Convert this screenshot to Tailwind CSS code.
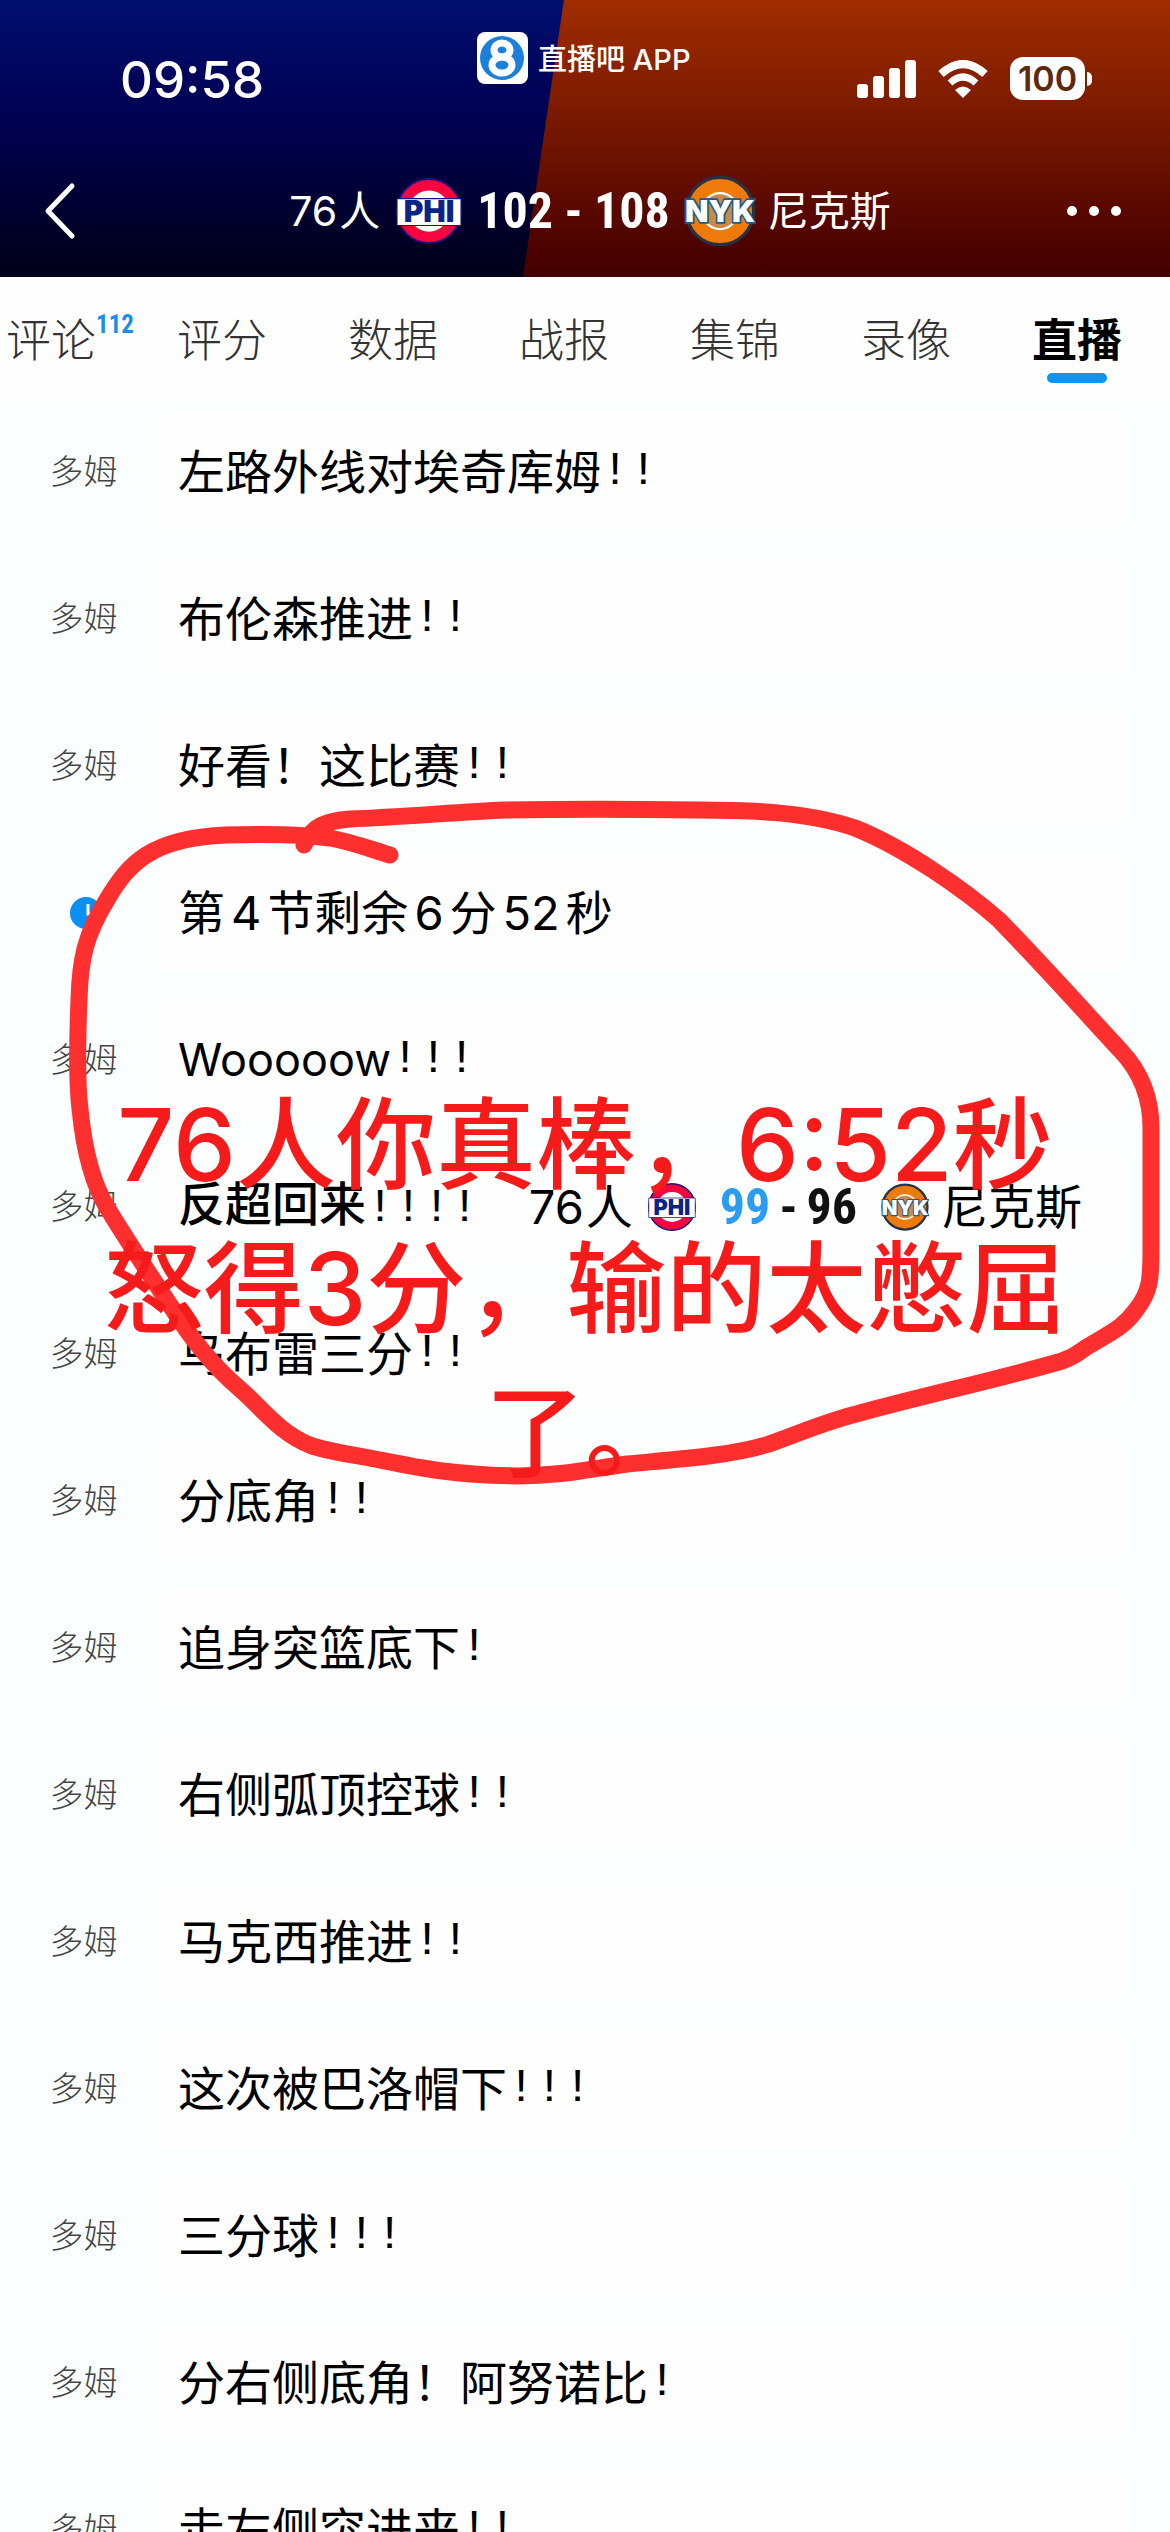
<!DOCTYPE html>
<html lang="zh-CN">
<head>
  <meta charset="UTF-8" />
  <meta name="viewport" content="width=device-width, initial-scale=1" />
  <title>76人 102 - 108 尼克斯</title>
  <script src="https://cdn.jsdelivr.net/npm/@tailwindcss/browser@4"></script>
</head>
<body class="relative flex h-screen flex-col overflow-hidden bg-[#fbfeff] font-['Inter','Noto_Sans_CJK_SC',sans-serif] text-black">

  <!-- Logos, reused in the header and in the score row -->
  <svg class="hidden" aria-hidden="true">
    <symbol id="logo-phi" viewBox="0 0 64 64">
      <circle cx="32" cy="32" r="31" fill="#f5063f" stroke="#1c1478" stroke-width="2" />
      <circle cx="32" cy="32" r="20" fill="#fff" />
      <path d="M1 20 H63 V46 H1 Z" fill="#fff" stroke="#1c1478" stroke-width="1" />
      <text x="32" y="43" text-anchor="middle" font-family="Inter, sans-serif" font-weight="900" font-size="29" fill="#0a2585">PHI</text>
    </symbol>
    <symbol id="logo-nyk" viewBox="0 0 64 64">
      <circle cx="32" cy="32" r="30" fill="#ef7a0c" stroke="#273142" stroke-width="3" />
      <circle cx="32" cy="32" r="16" fill="#c98a45" stroke="#fff" stroke-width="2" />
      <text x="32" y="42" text-anchor="middle" font-family="Inter, sans-serif" font-weight="900" font-size="27" fill="#fff" stroke="#1d5a8c" stroke-width="3" paint-order="stroke">NYK</text>
    </symbol>
  </svg>

  <header class="relative flex h-[277px] shrink-0 flex-col bg-linear-to-b from-[#000f70] via-[#00004c] to-[#000018] text-white">
    <div class="absolute inset-0 bg-linear-to-b from-[#a02d00] via-[#731500] to-[#420000] [clip-path:polygon(48.2%_0,100%_0,100%_100%,44.7%_100%)]"></div>

    <!-- Status bar -->
    <div class="relative flex h-[144px] items-start justify-between pr-[78px] pl-[120px]">
      <time class="mt-[48px] text-[51px] leading-[64px] font-medium">09:58</time>
      <div class="absolute top-[30px] left-[477px] flex items-center gap-[10px]">
        <svg class="h-[52px] w-[51px]" viewBox="0 0 51 52">
          <rect width="51" height="52" rx="8" fill="#fff" />
          <circle cx="25" cy="26" r="22" fill="#1c7fdc" />
          <ellipse cx="25" cy="18" rx="8" ry="7" fill="none" stroke="#fff" stroke-width="7" />
          <ellipse cx="25" cy="33" rx="10" ry="8" fill="none" stroke="#fff" stroke-width="7" />
        </svg>
        <span class="pt-1 text-[29px] leading-[52px] font-medium">直播吧 APP</span>
      </div>
      <div class="mt-[57px] flex h-[43px] items-center gap-[22px]">
        <svg class="h-[38px] w-[59px]" viewBox="0 0 59 38" fill="#fff">
          <rect x="0" y="24" width="11" height="14" rx="3" />
          <rect x="16" y="16" width="11" height="22" rx="3" />
          <rect x="32" y="8" width="11" height="30" rx="3" />
          <rect x="48" y="0" width="11" height="38" rx="3" />
        </svg>
        <svg class="h-[38px] w-[50px]" viewBox="0 0 50 38" fill="none" stroke="#fff" stroke-width="8">
          <path d="M3 14 Q25 -6 47 14" />
          <path d="M12 23 Q25 11 38 23" stroke-width="7" />
          <path d="M25 38 L17 30 Q25 23 33 30 Z" fill="#fff" stroke="none" />
        </svg>
        <div class="flex items-center gap-[2px]">
          <span class="flex h-[43px] w-[75px] items-center justify-center rounded-[13px] bg-white text-[34px] font-semibold text-[#5c2a0c]">100</span>
          <span class="h-[14px] w-[5px] rounded-r-full bg-white"></span>
        </div>
      </div>
    </div>

    <!-- Title bar -->
    <div class="relative flex h-[133px] items-center px-[42px]">
      <div class="flex flex-1">
        <button type="button" aria-label="返回">
          <svg class="h-[58px] w-[34px]" viewBox="0 0 34 58" fill="none" stroke="#fff" stroke-width="5" stroke-linecap="round" stroke-linejoin="round">
            <path d="M30 4 L6 29 L30 54" />
          </svg>
        </button>
      </div>
      <h1 class="flex items-center pl-4 text-[41px] leading-[56px]">
        <span>76</span><span class="ml-[2px]">人</span>
        <svg class="ml-[16px] h-[68px] w-[66px]"><use href="#logo-phi" /></svg>
        <span class="ml-[15px] font-['Roboto_Condensed','Roboto',sans-serif] text-[50px] font-bold">102 - 108</span>
        <svg class="ml-[14px] h-[74px] w-[72px]"><use href="#logo-nyk" /></svg>
        <span class="ml-[12px]">尼克斯</span>
      </h1>
      <div class="flex flex-1 justify-end pr-[6px]">
        <button type="button" aria-label="更多">
          <svg class="h-[12px] w-[56px]" viewBox="0 0 56 12" fill="#fff">
            <circle cx="6" cy="6" r="5" />
            <circle cx="28" cy="6" r="5" />
            <circle cx="50" cy="6" r="5" />
          </svg>
        </button>
      </div>
    </div>
  </header>

  <!-- Tabs -->
  <nav class="flex h-[127px] shrink-0 items-center justify-between bg-[#fefefe] pr-[48px] pl-[6px] text-[45px] leading-[64px] font-light text-[#333]">
    <a href="#" class="relative">评论<sup class="absolute top-0 left-full font-['Roboto_Condensed','Roboto',sans-serif] text-[25px] leading-[32px] font-bold text-[#1a8fe6]">112</sup></a>
    <a href="#">评分</a>
    <a href="#">数据</a>
    <a href="#">战报</a>
    <a href="#">集锦</a>
    <a href="#">录像</a>
    <a href="#" aria-current="page" class="relative font-bold text-black">直播<span class="absolute -bottom-[10px] left-[15px] h-[10px] w-[60px] rounded-full bg-[#0a95f7]"></span></a>
  </nav>

  <!-- Live feed -->
  <ul class="flex flex-col gap-[30px] pt-[9px] pr-[45px] text-[47px] leading-[64px]">
    <li class="flex h-[117px] shrink-0 items-center">
      <span class="w-[155px] pl-3 text-center text-[34px] font-light text-[#444]">多姆</span>
      <p class="flex h-full flex-1 items-center rounded-xl bg-[#fefefe] pl-[23px]">左路外线对埃奇库姆<span class="font-['Liberation_Mono',monospace]">!!</span></p>
    </li>
    <li class="flex h-[117px] shrink-0 items-center">
      <span class="w-[155px] pl-3 text-center text-[34px] font-light text-[#444]">多姆</span>
      <p class="flex h-full flex-1 items-center rounded-xl bg-[#fefefe] pl-[23px]">布伦森推进<span class="font-['Liberation_Mono',monospace]">!!</span></p>
    </li>
    <li class="flex h-[117px] shrink-0 items-center">
      <span class="w-[155px] pl-3 text-center text-[34px] font-light text-[#444]">多姆</span>
      <p class="flex h-full flex-1 items-center rounded-xl bg-[#fefefe] pl-[23px]">好看！这比赛<span class="font-['Liberation_Mono',monospace]">!!</span></p>
    </li>
    <li class="flex h-[117px] shrink-0 items-center">
      <span class="flex w-[155px] justify-center pl-4">
        <svg class="size-[32px]" viewBox="0 0 32 32">
          <circle cx="16" cy="16" r="16" fill="#0a8ff5" />
          <path d="M18 7 V17 H26" fill="none" stroke="#fff" stroke-width="3" />
        </svg>
      </span>
      <p class="flex h-full flex-1 items-center rounded-xl bg-[#fefefe] pl-[23px]">第<span class="mx-1.5">4</span>节剩余<span class="mx-1.5">6</span>分<span class="mx-1.5">52</span>秒</p>
    </li>
    <li class="flex h-[117px] shrink-0 items-center">
      <span class="w-[155px] pl-3 text-center text-[34px] font-light text-[#444]">多姆</span>
      <p class="flex h-full flex-1 items-center rounded-xl bg-[#fefefe] pl-[23px]"><span class="text-[45px]">Wooooow</span><span class="font-['Liberation_Mono',monospace]">!!!</span></p>
    </li>
    <li class="flex h-[117px] shrink-0 items-center">
      <span class="w-[155px] pl-3 text-center text-[34px] font-light text-[#444]">多姆</span>
      <p class="flex h-full flex-1 items-center rounded-xl bg-[#fefefe] pl-[23px]">
        <strong class="font-medium">反超回来<span class="font-['Liberation_Mono',monospace] font-normal">!!!!</span></strong>
        <span class="ml-[50px]">76</span><span class="ml-[2px]">人</span>
        <svg class="ml-[15px] size-[48px]"><use href="#logo-phi" /></svg>
        <span class="ml-[24px] flex gap-[9px] font-['Roboto_Condensed','Roboto',sans-serif] text-[50px] font-bold text-[#111]"><span class="text-[#2a9df0]">99</span><span>-</span><span>96</span></span>
        <svg class="ml-[24px] size-[48px]"><use href="#logo-nyk" /></svg>
        <span class="ml-[12px]">尼克斯</span>
      </p>
    </li>
    <li class="flex h-[117px] shrink-0 items-center">
      <span class="w-[155px] pl-3 text-center text-[34px] font-light text-[#444]">多姆</span>
      <p class="flex h-full flex-1 items-center rounded-xl bg-[#fefefe] pl-[23px]">乌布雷三分<span class="font-['Liberation_Mono',monospace]">!!</span></p>
    </li>
    <li class="flex h-[117px] shrink-0 items-center">
      <span class="w-[155px] pl-3 text-center text-[34px] font-light text-[#444]">多姆</span>
      <p class="flex h-full flex-1 items-center rounded-xl bg-[#fefefe] pl-[23px]">分底角<span class="font-['Liberation_Mono',monospace]">!!</span></p>
    </li>
    <li class="flex h-[117px] shrink-0 items-center">
      <span class="w-[155px] pl-3 text-center text-[34px] font-light text-[#444]">多姆</span>
      <p class="flex h-full flex-1 items-center rounded-xl bg-[#fefefe] pl-[23px]">追身突篮底下<span class="font-['Liberation_Mono',monospace]">!</span></p>
    </li>
    <li class="flex h-[117px] shrink-0 items-center">
      <span class="w-[155px] pl-3 text-center text-[34px] font-light text-[#444]">多姆</span>
      <p class="flex h-full flex-1 items-center rounded-xl bg-[#fefefe] pl-[23px]">右侧弧顶控球<span class="font-['Liberation_Mono',monospace]">!!</span></p>
    </li>
    <li class="flex h-[117px] shrink-0 items-center">
      <span class="w-[155px] pl-3 text-center text-[34px] font-light text-[#444]">多姆</span>
      <p class="flex h-full flex-1 items-center rounded-xl bg-[#fefefe] pl-[23px]">马克西推进<span class="font-['Liberation_Mono',monospace]">!!</span></p>
    </li>
    <li class="flex h-[117px] shrink-0 items-center">
      <span class="w-[155px] pl-3 text-center text-[34px] font-light text-[#444]">多姆</span>
      <p class="flex h-full flex-1 items-center rounded-xl bg-[#fefefe] pl-[23px]">这次被巴洛帽下<span class="font-['Liberation_Mono',monospace]">!!!</span></p>
    </li>
    <li class="flex h-[117px] shrink-0 items-center">
      <span class="w-[155px] pl-3 text-center text-[34px] font-light text-[#444]">多姆</span>
      <p class="flex h-full flex-1 items-center rounded-xl bg-[#fefefe] pl-[23px]">三分球<span class="font-['Liberation_Mono',monospace]">!!!</span></p>
    </li>
    <li class="flex h-[117px] shrink-0 items-center">
      <span class="w-[155px] pl-3 text-center text-[34px] font-light text-[#444]">多姆</span>
      <p class="flex h-full flex-1 items-center rounded-xl bg-[#fefefe] pl-[23px]">分右侧底角！阿努诺比<span class="font-['Liberation_Mono',monospace]">!</span></p>
    </li>
    <li class="flex h-[117px] shrink-0 items-center">
      <span class="w-[155px] pl-3 text-center text-[34px] font-light text-[#444]">多姆</span>
      <p class="flex h-full flex-1 items-center rounded-xl bg-[#fefefe] pl-[23px]">走左侧突进来<span class="font-['Liberation_Mono',monospace]">!!</span></p>
    </li>
  </ul>

  <!-- Hand-drawn circle and caption over the feed -->
  <svg class="pointer-events-none absolute inset-x-0 top-[780px] w-full" viewBox="0 780 1170 720" fill="none" stroke="#fe2f2f" stroke-width="17" stroke-linecap="round" stroke-linejoin="round">
    <path d="M390 855 C370 849 352 842 330 838 C300 834 262 834 226 835 C150 838 128 865 108 898 C85 935 80 960 79 1000 C77 1050 77 1085 80 1109 C84 1150 93 1185 108 1209 C125 1237 150 1275 172 1308 C195 1345 220 1372 240 1389 C262 1408 280 1434 312 1446 C335 1453 355 1455 375 1459 C415 1467 450 1475 517 1476 C560 1476 590 1469 627 1464 C680 1459 730 1456 769 1444 C800 1433 830 1420 860 1413 C930 1394 1000 1379 1062 1361 C1078 1356 1080 1350 1092 1344 C1110 1333 1124 1327 1136 1310 C1150 1292 1151 1280 1151 1250 C1151 1210 1151 1170 1151 1128 C1151 1095 1138 1069 1121 1051 C1085 1012 1040 962 999 920 C965 890 905 848 855 828 C805 811 745 810 696 810 C630 809 560 809 505 810 C460 812 400 817 350 819 C325 821 312 826 304 845" />
  </svg>
  <p class="pointer-events-none absolute inset-x-0 top-[1073px] text-center text-[100px] leading-[144px] font-medium text-[#f51b1b]">76人你真棒，6:52秒<br />怒得3分，输的太憋屈<br />了。</p>

</body>
</html>
